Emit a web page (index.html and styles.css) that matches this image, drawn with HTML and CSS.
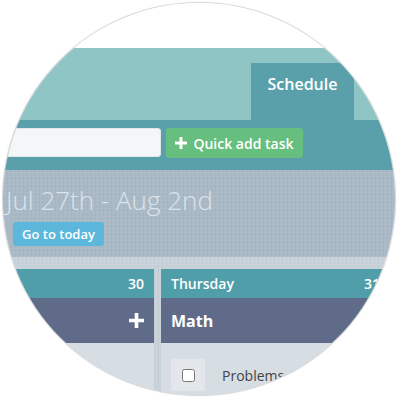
FILE: index.html
```html
<!DOCTYPE html>
<html lang="en">
<head>
  <meta charset="UTF-8" />
  <meta name="viewport" content="width=device-width, initial-scale=1.0"/>
  <title>Schedule</title>
  <link rel="stylesheet" href="styles.css">
</head>
<body>

<div class="frame">
  <div class="lens">
    <div class="app">
      <div class="topspace"></div>

      <nav class="nav">
        <a class="tab" href="#">Schedule</a>
      </nav>

      <div class="toolbar">
        <input type="text" class="quick-input" />
        <button class="btn-add">
          <svg class="plus" viewBox="0 0 12 12" width="12" height="12"><path d="M6 0v12M0 6h12" stroke="#fff" stroke-width="3"/></svg>
          Quick add task
        </button>
      </div>

      <header class="week">
        <h1>Jul 27th - Aug 2nd</h1>
        <button class="btn-today">Go to today</button>
      </header>

      <section class="days">
        <div class="day day-prev">
          <div class="day-head"><span></span><span>30</span></div>
          <div class="subject subject-add">
            <svg viewBox="0 0 14 14" width="15" height="15"><path d="M7 0v14M0 7h14" stroke="#fff" stroke-width="3.4"/></svg>
          </div>
          <div class="tasks"></div>
        </div>

        <div class="day">
          <div class="day-head"><span>Thursday</span><span>31</span></div>
          <div class="subject">Math</div>
          <div class="tasks">
            <div class="task">
              <div class="check-cell"><input type="checkbox" /></div>
              <span class="task-name">Problems 4.1 to 4.9</span>
            </div>
          </div>
        </div>
      </section>
    </div>
  </div>
</div>

</body>
</html>
```

FILE: styles.css
```css
body {
  font-family: "Open Sans", Arial, sans-serif;
  background: #fff;
  margin: 0;
  padding: 0;
}
.frame {
  width: 400px;
  height: 400px;
  padding: 3px;
  box-sizing: border-box;
}
.lens {
  width: 392px;
  height: 392px;
  border-radius: 50%;
  overflow: hidden;
  box-shadow: 0 0 0 1px #d8d8d8, 0 0 3px rgba(0,0,0,0.12);
}
.app {
  width: 392px;
}
.topspace {
  height: 45px;
  background: #fff;
}

/* top navigation */
.nav {
  height: 72px;
  background: #8fc5c5;
  display: flex;
  justify-content: flex-end;
  align-items: flex-end;
  padding-right: 41px;
}
.tab {
  width: 103px;
  height: 57px;
  background: #59a0ab;
  color: #fff;
  text-decoration: none;
  font-size: 16px;
  font-weight: 600;
  text-align: center;
  line-height: 42px;
}

.toolbar {
  height: 50px;
  background: #59a0ab;
  display: flex;
  align-items: flex-start;
  padding-top: 8px;
  box-sizing: border-box;
}
.quick-input {
  width: 158px;
  height: 29px;
  box-sizing: border-box;
  border: 1px solid #e3e7ea;
  border-radius: 3px;
  background: #f4f6f8;
  margin: 0;
}
.btn-add {
  margin-left: 5px;
  width: 137px;
  height: 30px;
  border: none;
  border-radius: 3px;
  background: #66bf7e;
  color: #fff;
  font-family: "Open Sans", Arial, sans-serif;
  font-size: 14px;
  font-weight: 600;
  display: flex;
  align-items: center;
  justify-content: center;
  gap: 6px;
  padding: 0;
}

/* week header with linen texture */
.week,
.days {
  background-color: #a9b9c6;
  background-image:
    repeating-linear-gradient(0deg, rgba(255,255,255,0.05) 0 1px, transparent 1px 4px),
    repeating-linear-gradient(90deg, rgba(80,100,120,0.05) 0 1px, transparent 1px 4px);
}
.week {
  height: 87px;
  box-sizing: border-box;
  padding: 11px 0 0 3px;
}
.week h1 {
  margin: 0;
  font-size: 26px;
  font-weight: 300;
  line-height: 38px;
  color: #dce4eb;
  white-space: nowrap;
}
.btn-today {
  margin: 3px 0 0 7px;
  width: 91px;
  height: 24px;
  border: none;
  border-radius: 3px;
  background: #5bb8dc;
  color: #fff;
  font-family: "Open Sans", Arial, sans-serif;
  font-size: 13px;
  font-weight: 600;
  padding: 0;
}

/* day columns */
.days {
  background-color: #c9d2d9;
  padding-top: 12px;
  height: 200px;
  display: flex;
  gap: 7px;
  margin-left: -49px;
}
.day {
  width: 229px;
  flex-shrink: 0;
  background: #d6dde3;
}
.day-prev {
  width: 200px;
}
.day-head {
  height: 29px;
  background: #4f9ea9;
  color: #fff;
  font-size: 14px;
  font-weight: 600;
  display: flex;
  justify-content: space-between;
  align-items: center;
  padding: 0 10px;
}
.subject {
  height: 45px;
  background: #5f6b88;
  color: #fff;
  font-size: 16px;
  font-weight: 700;
  display: flex;
  align-items: center;
  padding: 0 10px;
}
.subject-add {
  justify-content: flex-end;
  padding-right: 10px;
}
.tasks {
  padding: 16px 10px 0;
}
.task {
  display: flex;
  align-items: center;
}
.check-cell {
  width: 34px;
  height: 32px;
  background: #e3e7eb;
  border-radius: 2px;
  display: flex;
  align-items: center;
  justify-content: center;
}
.check-cell input {
  width: 13px;
  height: 13px;
  margin: 0;
}
.task-name {
  margin-left: 17px;
  font-size: 14px;
  color: #444;
  white-space: nowrap;
}
```
